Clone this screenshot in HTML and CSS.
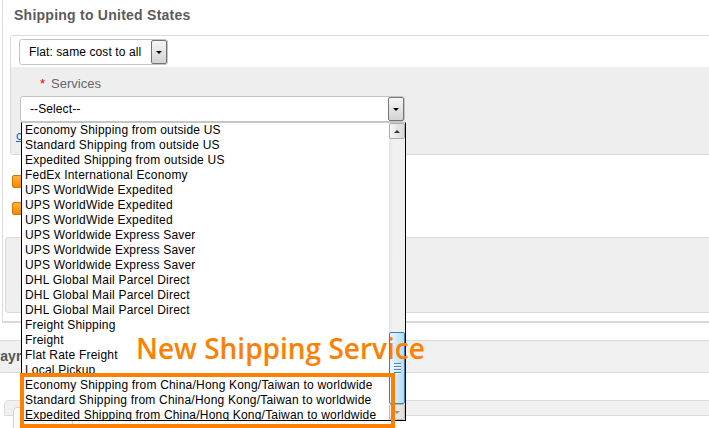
FILE: index.html
```html
<!DOCTYPE html>
<html>
<head>
<meta charset="utf-8">
<title>Shipping</title>
<link rel="stylesheet" href="styles.css">
</head>
<body>
<div class="page">
  <div class="panel">
    <h2 class="title">Shipping to United States</h2>
    <div class="shipbox">
      <div class="row-type">
        <div class="sel sel-flat"><span class="sel-text">Flat: same cost to all</span><span class="sel-btn"><i class="tri"></i></span></div>
      </div>
      <div class="row-service">
        <div class="label"><span class="req">*</span>Services</div>
        <div class="sel sel-service"><span class="sel-text">--Select--</span><span class="sel-btn"><i class="tri"></i></span></div>
        <a class="link" href="#">c</a>
      </div>
    </div>
    <div class="options">
      <div class="opt"><span class="chk"></span></div>
      <div class="opt"><span class="chk"></span></div>
    </div>
    <div class="box2"></div>
  </div>
  <div class="payhead">Payment</div>
  <div class="bar"><div class="field"></div></div>

  <div class="listbox">
    <ul class="items">
      <li>Economy Shipping from outside US</li>
      <li>Standard Shipping from outside US</li>
      <li>Expedited Shipping from outside US</li>
      <li>FedEx International Economy</li>
      <li>UPS WorldWide Expedited</li>
      <li>UPS WorldWide Expedited</li>
      <li>UPS WorldWide Expedited</li>
      <li>UPS Worldwide Express Saver</li>
      <li>UPS Worldwide Express Saver</li>
      <li>UPS Worldwide Express Saver</li>
      <li>DHL Global Mail Parcel Direct</li>
      <li>DHL Global Mail Parcel Direct</li>
      <li>DHL Global Mail Parcel Direct</li>
      <li>Freight Shipping</li>
      <li>Freight</li>
      <li>Flat Rate Freight</li>
      <li>Local Pickup</li>
      <li>Economy Shipping from China/Hong Kong/Taiwan to worldwide</li>
      <li>Standard Shipping from China/Hong Kong/Taiwan to worldwide</li>
      <li>Expedited Shipping from China/Hong Kong/Taiwan to worldwide</li>
    </ul>
    <div class="scroll">
      <div class="sb-btn"><i class="tri-up"></i></div>
      <div class="sb-track"></div>
      <div class="sb-thumb"><i></i><i></i><i></i><i></i></div>
      <div class="sb-btn sb-down"><i class="tri-dn"></i></div>
    </div>
  </div>

  <div class="callout-text">New Shipping Service</div>
  <div class="callout-box"></div>
</div>
</body>
</html>
```
FILE: styles.css
```css
* { box-sizing: border-box; }
body { margin: 0; background: #fff; font-family: "Liberation Sans", Arial, sans-serif; }
.page { position: relative; width: 709px; height: 428px; overflow: hidden; }

.panel { margin-left: 2px; height: 323px; border-left: 1px solid #dcdcdc; border-bottom: 2px solid #d8d8d8; }
.title { margin: 0; height: 35px; padding: 7px 0 0 11px; font-size: 14px; line-height: 16px; font-weight: bold; letter-spacing: .25px; color: #5b5b5b; }

.shipbox { margin-left: 7px; height: 120px; border: 1px solid #dadada; border-right: 0; border-radius: 4px 0 0 4px; overflow: hidden; }
.row-type { height: 31px; padding: 3px 0 0 8px; background: #fff; }
.row-service { height: 87px; padding: 10px 0 0 9px; background: #eeeeee; }

.sel { display: flex; align-items: stretch; height: 26px; border: 1px solid #c4c4c4; border-radius: 3px; background: #fff; font-size: 12px; color: #000; }
.sel-text { flex: 1; line-height: 24px; white-space: nowrap; letter-spacing: .1px; }
.sel-flat { width: 149px; padding-left: 9px; }
.sel-service { width: 385px; margin-top: 5px; padding-left: 9px; }
.sel-btn { width: 16px; display: flex; align-items: center; justify-content: center; border: 1px solid #747474; border-radius: 2px; background: linear-gradient(#f6f6f6, #d3d3d3); }
.tri { width: 0; height: 0; border-left: 3px solid transparent; border-right: 3px solid transparent; border-top: 3px solid #000; }

.label { height: 14px; line-height: 14px; padding-left: 20px; font-size: 13px; color: #666; }
.req { margin-right: 6px; color: #e00; }
.link { display: block; margin: 7px 0 0 -4px; font-size: 13px; line-height: 14px; color: #1a66c2; }

.options { height: 82px; padding: 20px 0 0 9px; }
.opt { display: flex; align-items: center; height: 13px; margin-bottom: 14px; }
.chk { width: 10px; height: 13px; border: 1px solid #d87400; border-radius: 2px; background: linear-gradient(#ffb23c, #f08a00); }

.box2 { height: 76px; margin-left: 2px; border: 1px solid #dadada; border-right: 0; border-radius: 4px 0 0 4px; background: #efefef; }

.payhead { height: 33px; margin-top: 17px; border-top: 1px solid #dcdcdc; border-bottom: 1px solid #dcdcdc; background: #f0f0f0; font-size: 14px; font-weight: bold; line-height: 31px; color: #555; text-indent: -9px; white-space: nowrap; }
.bar { height: 16px; margin: 27px 0 0 4px; border-top: 1px solid #dcdcdc; border-bottom: 1px solid #dcdcdc; border-left: 1px solid #dcdcdc; border-top-left-radius: 5px; background: #f0f0f0; }
.field { width: 60px; height: 40px; margin: 6px 0 0 8px; border: 1px solid #d4d4d4; border-radius: 4px; background: #fafafa; }

/* open dropdown list (overlay) */
.listbox { position: absolute; left: 21px; top: 122px; width: 385px; height: 299px; display: flex; border: 1px solid #000; border-top-color: #c8c8c8; background: #fff; }
.items { flex: 1; margin: 0; padding: 0; list-style: none; overflow: hidden; font-size: 12px; letter-spacing: .2px; color: #000; }
.items li { height: 15px; line-height: 15px; padding-left: 3px; white-space: nowrap; }

.scroll { width: 16px; display: flex; flex-direction: column; background: linear-gradient(90deg, #e4e4e4, #f1f1f1 25%, #efefef); }
.sb-btn { height: 16px; flex: none; display: flex; align-items: center; justify-content: center; border: 1px solid #ababab; border-radius: 2px; background: linear-gradient(90deg, #f7f7f7, #e6e6e6 50%, #d9d9d9); }
.sb-down { opacity: .75; }
.tri-up { width: 0; height: 0; border-left: 3px solid transparent; border-right: 3px solid transparent; border-bottom: 3px solid #333; }
.tri-dn { width: 0; height: 0; border-left: 3px solid transparent; border-right: 3px solid transparent; border-top: 3px solid #777; }
.sb-track { height: 193px; flex: none; }
.sb-thumb { height: 72px; flex: none; display: flex; flex-direction: column; align-items: center; justify-content: center; gap: 1px; border: 1px solid #3c7fb1; border-radius: 2px; background: linear-gradient(90deg, #eaf6fd, #d3ecfb 45%, #b2daf4); }
.sb-thumb i { display: block; width: 7px; height: 1px; background: #4f86b8; box-shadow: 0 1px 0 #eef8ff; margin-bottom: 1px; }

/* annotation overlay */
.callout-text { position: absolute; left: 136px; top: 328px; font-family: "Open Sans", sans-serif; font-size: 28px; font-weight: 600; line-height: 40px; color: #ff8000; white-space: nowrap; }
.callout-box { position: absolute; left: 20px; top: 373px; width: 375px; height: 55px; border: 4px solid #ff8000; }
```
